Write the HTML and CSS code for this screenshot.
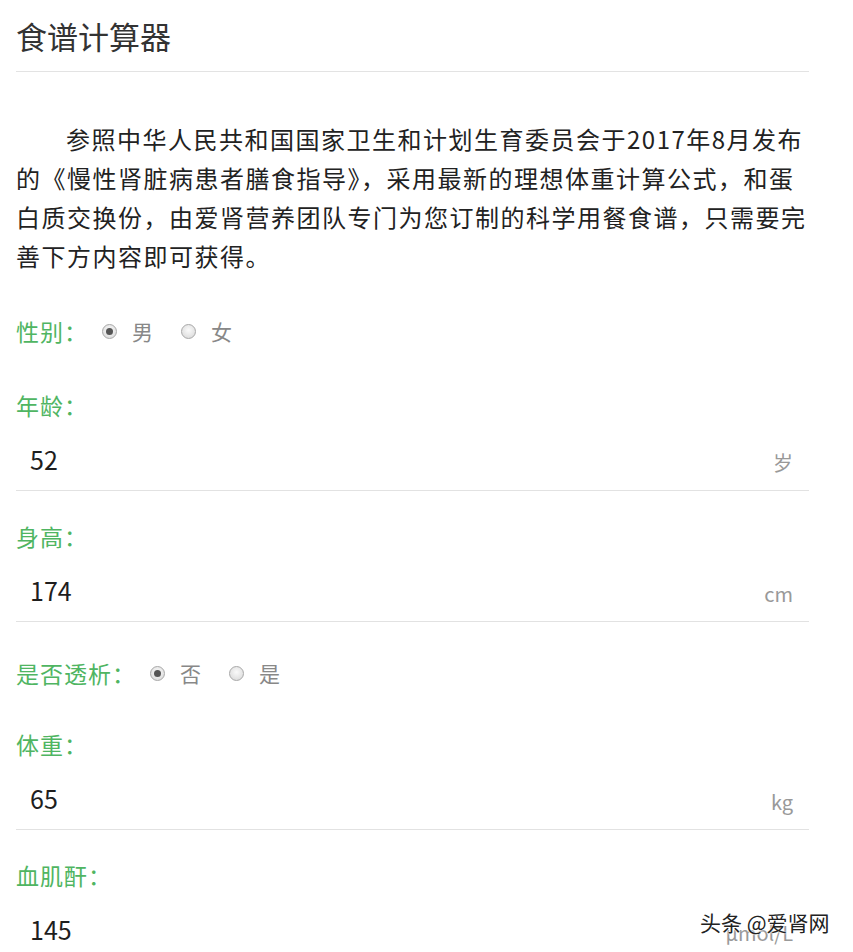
FILE: index.html
```html
<!DOCTYPE html>
<html lang="zh-CN">
<head>
  <meta charset="UTF-8">
  <meta name="viewport" content="width=device-width, initial-scale=1.0">
  <title>食谱计算器</title>
  <link rel="stylesheet" href="styles.css">
</head>
<body>
  <main class="page">
    <header class="page-head">
      <h1>食谱计算器</h1>
    </header>
    <p class="intro">参照中华人民共和国国家卫生和计划生育委员会于2017年8月发布的《慢性肾脏病患者膳食指导》，采用最新的理想体重计算公式，和蛋白质交换份，由爱肾营养团队专门为您订制的科学用餐食谱，只需要完善下方内容即可获得。</p>

    <form class="calc-form">
      <div class="choice-row">
        <span class="label">性别：</span>
        <span class="radio checked"></span><span class="opt">男</span>
        <span class="radio"></span><span class="opt">女</span>
      </div>

      <div class="field">
        <div class="label">年龄：</div>
        <div class="input-row"><span class="value">52</span><span class="unit">岁</span></div>
      </div>

      <div class="field">
        <div class="label">身高：</div>
        <div class="input-row"><span class="value">174</span><span class="unit">cm</span></div>
      </div>

      <div class="choice-row">
        <span class="label">是否透析：</span>
        <span class="radio checked"></span><span class="opt">否</span>
        <span class="radio"></span><span class="opt">是</span>
      </div>

      <div class="field">
        <div class="label">体重：</div>
        <div class="input-row"><span class="value">65</span><span class="unit">kg</span></div>
      </div>

      <div class="field">
        <div class="label">血肌酐：</div>
        <div class="input-row"><span class="value">145</span><span class="unit">μmol/L</span></div>
      </div>
    </form>
  </main>
  <div class="watermark">头条 @爱肾网</div>
</body>
</html>
```

FILE: styles.css
```css
body {
  margin: 0;
  padding: 0;
  background: #fff;
  font-family: "Noto Sans CJK SC", "Noto Sans", sans-serif;
  color: #222;
  overflow: hidden;
}
.page {
  width: 793px;
  margin-left: 16px;
}
.page-head {
  padding: 16px 0 15px;
  border-bottom: 1px solid #e3e3e3;
}
.page-head h1 {
  margin: 0;
  font-size: 31px;
  font-weight: normal;
  line-height: 40px;
  color: #333;
}
.intro {
  margin: 47px 0 0;
  font-size: 24px;
  letter-spacing: 1.5px;
  line-height: 39px;
  text-indent: 50px;
  color: #222;
}
.calc-form {
  margin-top: 41px;
}
.label {
  font-size: 23px;
  line-height: 30px;
  color: #4fb562;
  letter-spacing: 1px;
}
.choice-row {
  display: flex;
  align-items: center;
  height: 30px;
  margin-bottom: 44px;
}
.choice-row .label {
  margin-right: 14px;
}
.radio {
  width: 13px;
  height: 13px;
  border: 1px solid #a8a8a8;
  border-radius: 50%;
  background: radial-gradient(circle at 50% 40%, #fafafa, #d6d6d6);
  position: relative;
  box-sizing: content-box;
}
.radio.checked::after {
  content: "";
  position: absolute;
  left: 3px;
  top: 3px;
  width: 7px;
  height: 7px;
  border-radius: 50%;
  background: #555;
}
.opt {
  font-size: 21px;
  color: #888;
  margin-left: 15px;
  margin-right: 28px;
}
.field {
  margin-bottom: 30px;
}
.field + .choice-row {
  padding-top: 6px;
  margin-bottom: 41px;
}
.input-row {
  display: flex;
  align-items: center;
  justify-content: space-between;
  height: 60px;
  margin-top: 10px;
  padding: 0 16px 0 14px;
  border-bottom: 1px solid #e2e2e2;
}
.value {
  font-size: 25px;
  color: #1e1e1e;
  margin-top: -2px;
}
.unit {
  font-size: 20px;
  color: #999;
  margin-top: 4px;
}
.watermark {
  position: absolute;
  left: 700px;
  top: 908px;
  font-size: 21px;
  line-height: 28px;
  color: #222;
  text-shadow: 0 0 2px #fff, 0 0 2px #fff;
}
```
